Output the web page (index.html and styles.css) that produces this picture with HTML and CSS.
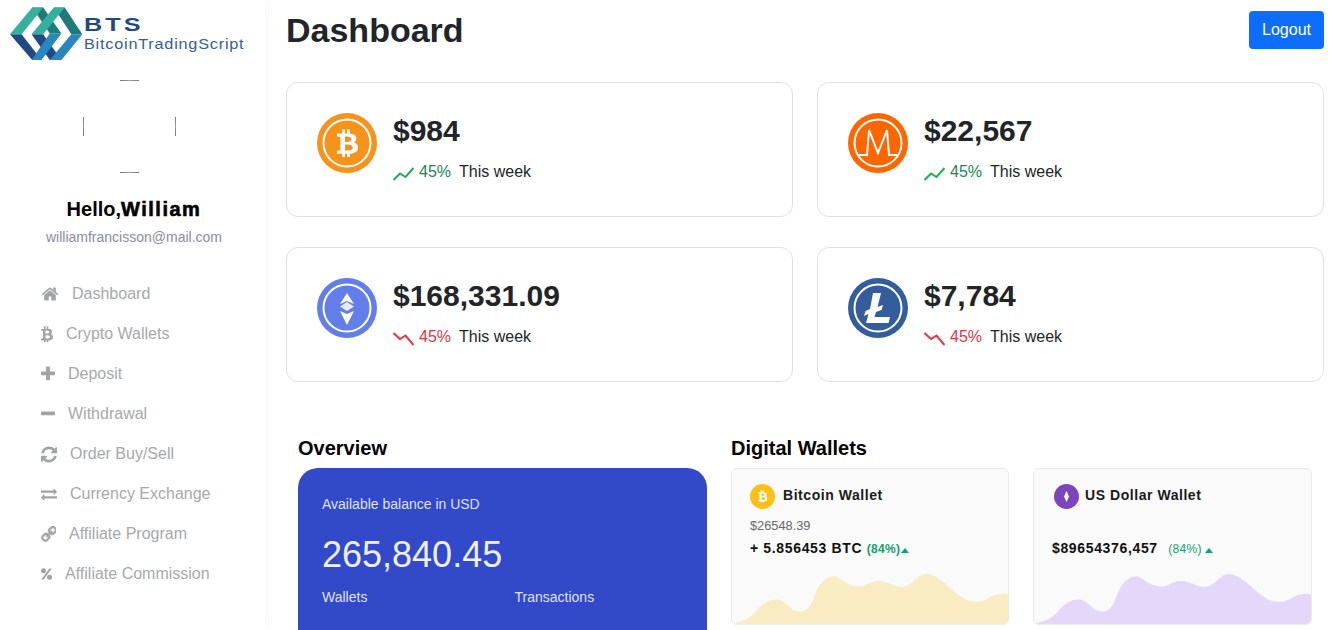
FILE: index.html
```html
<!DOCTYPE html>
<html lang="en">
<head>
    <meta charset="UTF-8">
    <meta name="viewport" content="width=device-width, initial-scale=1.0">
    <title>Dashboard</title>
    <link rel="stylesheet" href="styles.css">
</head>
<body>

<svg class="defs" width="0" height="0">
    <symbol id="btc" viewBox="64 128 1200 1536"><path d="M1167 640q18 182-131 258 117 28 175 103t45 214q-7 71-32.500 125t-64.500 89-97 58.500-121.500 34.500-145.500 20v255h-154v-251q-80 0-122-1v252h-154v-255q-18 0-54-.5t-55-.5h-200l31-183h111q50 0 58-51v-402h16q-6-1-16-1v-287q-13-68-89-68h-111v-164l212 1q64 0 97-1v-252h154v247q82-2 122-2v-245h154v252q79 7 140 22.500t113 45 82.500 78 36.500 114.500zm-215 545q0-36-15-64t-37-46-57.500-30.500-65.500-18.500-74-9-69-3-64.500 1-47.500 1v338q8 0 37 .5t48 .5 53-1.500 58.500-4 57-8.500 55.500-14 47.500-21 39.500-30 24.500-40 9.500-51zm-71-476q0-33-12.500-58.500t-30.500-42-48-28-55-16.500-61.500-8-58-2.500-54 1-39.500 .5v307q5 0 34.500 .5t46.500 0 50-2 55-5.500 51.500-11 48.500-18.500 37-27 27-38.500 9-51z"/></symbol>
    <symbol id="up" viewBox="0 0 21 14"><polyline points="0.500,13 7,6.500 12.500,10 20.500,1" fill="none" stroke="currentColor" stroke-width="2"/></symbol>
    <symbol id="down" viewBox="0 0 21 14"><polyline points="0.500,1 7,7 12.500,3.500 20.500,13" fill="none" stroke="currentColor" stroke-width="2"/></symbol>
    <symbol id="wave" viewBox="20 340 830 152" preserveAspectRatio="none"><path d="M20 490C60 485 80 470 100 445C120 425 140 415 160 420C185 425 195 455 225 455C255 455 262 420 275 390C290 360 315 348 330 350C350 355 360 380 405 380C425 380 430 365 460 364C490 363 505 382 530 382C565 380 575 343 605 343C640 343 680 395 720 418C745 430 770 428 790 415C810 403 830 400 850 403L850 492L20 492Z"/></symbol>
</svg>

<!-- Sidebar -->
<div class="sidebar">
    <div class="logo">
        <svg width="83" height="62" viewBox="0 0 250 185">
            <polygon points="30,102 65,102 125,180 97,180" fill="#1f4a84"/>
            <polygon points="95,102 130,102 185,180 150,180" fill="#1f4a84"/>
            <polygon points="150,100 185,100 125,180 95,180" fill="#2a86c0"/>
            <polygon points="215,102 248,102 185,180 150,180" fill="#2a86c0"/>
            <polygon points="97,22 130,22 185,100 150,100" fill="#1e7b78"/>
            <polygon points="162,22 195,22 248,102 215,102" fill="#1e7b78"/>
            <polygon points="30,102 97,22 130,22 65,102" fill="#34b09f"/>
            <polygon points="95,102 162,22 195,22 130,102" fill="#34b09f"/>
        </svg>
        <div class="logo-text">
            <span class="logo-bts">BTS</span>
            <span class="logo-name">BitcoinTradingScript</span>
        </div>
    </div>

    <svg class="avatar" width="93" height="93" viewBox="0 0 93 93">
        <path d="M37 .5Q46.500 0 56 .5M37 92.500Q46.500 93 56 92.500M.5 37Q0 46.500 .5 56M92.500 37Q93 46.500 92.500 56" fill="none" stroke="#777" stroke-width="1"/>
    </svg>

    <div class="hello">Hello,<strong>William</strong></div>
    <div class="email">williamfrancisson@mail.com</div>

    <ul class="menu">
        <li>
            <svg width="18" height="18" viewBox="0 0 1664 1792"><path d="M1408 992v480q0 26-19 45t-45 19h-384v-384h-256v384h-384q-26 0-45-19t-19-45v-480q0-1 .5-3t.5-3l575-474 575 474q1 2 1 6zm223-69l-62 74q-8 9-21 11h-3q-13 0-21-7l-692-577-692 577q-12 8-24 7-13-2-21-11l-62-74q-8-10-7-23.500t11-21.500l719-599q32-26 76-26t76 26l244 204v-195q0-14 9-23t23-9h192q14 0 23 9t9 23v408l219 182q10 8 11 21.500t-7 23.500z"/></svg>
            Dashboard
        </li>
        <li>
            <svg width="12" height="16"><use href="#btc"/></svg>
            Crypto Wallets
        </li>
        <li>
            <svg width="14" height="16" viewBox="190 190 1412 1412"><path d="M1600 736v192q0 40-28 68t-68 28h-416v416q0 40-28 68t-68 28h-192q-40 0-68-28t-28-68v-416h-416q-40 0-68-28t-28-68v-192q0-40 28-68t68-28h416v-416q0-40 28-68t68-28h192q40 0 68 28t28 68v416h416q40 0 68 28t28 68z"/></svg>
            Deposit
        </li>
        <li>
            <svg width="14" height="16" viewBox="190 190 1412 1412"><path d="M1600 736v192q0 40-28 68t-68 28h-1216q-40 0-68-28t-28-68v-192q0-40 28-68t68-28h1216q40 0 68 28t28 68z"/></svg>
            Withdrawal
        </li>
        <li>
            <svg width="16" height="17" viewBox="128 128 1536 1536"><path d="M1639 1056q0 5-1 7-64 268-268 434.500t-478 166.500q-146 0-282.500-55t-243.500-157l-129 129q-19 19-45 19t-45-19-19-45v-448q0-26 19-45t45-19h448q26 0 45 19t19 45-19 45l-137 137q71 66 161 102t187 36q134 0 250-65t186-179q11-17 53-117 8-23 30-23h192q13 0 22.500 9.500t9.500 22.500zm25-800v448q0 26-19 45t-45 19h-448q-26 0-45-19t-19-45 19-45l138-138q-148-137-349-137-134 0-250 65t-186 179q-11 17-53 117-8 23-30 23h-199q-13 0-22.500-9.500t-9.500-22.500v-7q65-268 270-434.500t480-166.500q146 0 284 55.500t245 156.500l130-129q19-19 45-19t45 19 19 45z"/></svg>
            Order Buy/Sell
        </li>
        <li>
            <svg width="16" height="16" viewBox="0 128 1792 1536"><path d="M1792 1184v192q0 13-9.500 22.500t-22.500 9.500h-1376v192q0 13-9.500 22.500t-22.500 9.500q-12 0-24-10l-319-320q-9-9-9-22 0-14 9-23l320-320q9-9 23-9 13 0 22.500 9.500t9.500 22.500v192h1376q13 0 22.500 9.500t9.500 22.500zm0-544q0 14-9 23l-320 320q-9 9-23 9-13 0-22.500-9.500t-9.500-22.500v-192h-1376q-13 0-22.500-9.500t-9.500-22.500v-192q0-13 9.500-22.500t22.500-9.500h1376v-192q0-14 9-23t23-9q12 0 24 10l319 319q9 9 9 23z"/></svg>
            Currency Exchange
        </li>
        <li>
            <svg class="icon-link" width="15" height="17" viewBox="128 128 1536 1536"><path transform="translate(1792 0) scale(-1 1)" d="M1456 1216q0-40-28-68l-208-208q-28-28-68-28-42 0-72 32 3 3 19 18.500t21.500 21.500 15 19 13 25.500 3.500 27.500q0 40-28 68t-68 28q-15 0-27.500-3.500t-25.500-13-19-15-21.500-21.500-18.500-19q-33 31-33 73 0 40 28 68l206 207q27 27 68 27 40 0 68-26l147-146q28-28 28-67zm-703-705q0-40-28-68l-206-207q-28-28-68-28-39 0-68 27l-147 146q-28 28-28 67 0 40 28 68l208 208q27 27 68 27 42 0 72-31-3-3-19-18.500t-21.500-21.500-15-19-13-25.500-3.500-27.500q0-40 28-68t68-28q15 0 27.500 3.500t25.500 13 19 15 21.500 21.500 18.500 19q33-31 33-73zm895 705q0 120-85 203l-147 146q-83 83-203 83-121 0-204-85l-206-207q-83-83-83-203 0-123 88-209l-88-88q-86 88-208 88-120 0-204-84l-208-208q-84-84-84-204t85-203l147-146q83-83 203-83 121 0 204 85l206 207q83 83 83 203 0 123-88 209l88 88q86-88 208-88 120 0 204 84l208 208q84 84 84 204z"/></svg>
            Affiliate Program
        </li>
        <li>
            <svg width="11" height="12" viewBox="0 0 11 12"><circle cx="2.500" cy="2.800" r="2.500"/><circle cx="8.500" cy="9.200" r="2.500"/><polygon points="8.300,.6 10.700,.6 2.700,11.400 .3,11.400"/></svg>
            Affiliate Commission
        </li>
    </ul>
</div>

<!-- Main Content -->
<div class="content">
    <div class="topbar">
        <h1>Dashboard</h1>
        <button class="logout">Logout</button>
    </div>

    <div class="stats">
        <div class="stat-card">
            <svg class="coin" width="60" height="60" viewBox="0 0 60 60">
                <circle cx="30" cy="30" r="30" fill="#f7931a"/>
                <circle cx="30" cy="30" r="23.500" fill="none" stroke="#fff" stroke-width="2"/>
                <use href="#btc" x="20" y="15" width="21" height="29" fill="#fff"/>
            </svg>
            <div>
                <div class="amount">$984</div>
                <div class="trend">
                    <svg class="trend-up" width="21" height="14"><use href="#up"/></svg>
                    <span class="pct-up">45%</span>
                    <span>This week</span>
                </div>
            </div>
        </div>
        <div class="stat-card">
            <svg class="coin" width="60" height="60" viewBox="0 0 60 60">
                <circle cx="30" cy="30" r="30" fill="#ff6600"/>
                <circle cx="30" cy="30" r="23.500" fill="none" stroke="#fff" stroke-width="2"/>
                <polyline points="9,42 19,42 21,17 30,40 39,17 41,42 51,42" fill="none" stroke="#fff" stroke-width="2"/>
            </svg>
            <div>
                <div class="amount">$22,567</div>
                <div class="trend">
                    <svg class="trend-up" width="21" height="14"><use href="#up"/></svg>
                    <span class="pct-up">45%</span>
                    <span>This week</span>
                </div>
            </div>
        </div>
        <div class="stat-card">
            <svg class="coin" width="60" height="60" viewBox="0 0 60 60">
                <circle cx="30" cy="30" r="30" fill="#627eea"/>
                <circle cx="30" cy="30" r="23.500" fill="none" stroke="#fff" stroke-width="2"/>
                <polygon points="30,15 37,26 30,23 23,26" fill="#fff"/>
                <polygon points="30,24 37,28.500 30,33 23,28.500" fill="#fff" opacity=".85"/>
                <polygon points="30,47 37,33 30,36 23,33" fill="#fff"/>
            </svg>
            <div>
                <div class="amount">$168,331.09</div>
                <div class="trend">
                    <svg class="trend-down" width="21" height="14"><use href="#down"/></svg>
                    <span class="pct-down">45%</span>
                    <span>This week</span>
                </div>
            </div>
        </div>
        <div class="stat-card">
            <svg class="coin" width="60" height="60" viewBox="0 0 60 60">
                <circle cx="30" cy="30" r="30" fill="#345d9d"/>
                <circle cx="30" cy="30" r="23.500" fill="none" stroke="#fff" stroke-width="2"/>
                <polygon points="25,15 33,15 29.500,29 35,27 33.500,32 28,34 26.500,39 42,39 40.500,45 18,45 20.500,36 16,38 17.500,33 22,31" fill="#fff"/>
            </svg>
            <div>
                <div class="amount">$7,784</div>
                <div class="trend">
                    <svg class="trend-down" width="21" height="14"><use href="#down"/></svg>
                    <span class="pct-down">45%</span>
                    <span>This week</span>
                </div>
            </div>
        </div>
    </div>

    <div class="lower">
        <div class="overview">
            <h2>Overview</h2>
            <div class="balance-card">
                <div class="balance-label">Available balance in USD</div>
                <div class="balance">265,840.45</div>
                <div class="balance-links">
                    <span>Wallets</span>
                    <span>Transactions</span>
                </div>
            </div>
        </div>
        <div class="wallets">
            <h2>Digital Wallets</h2>
            <div class="wallet-row">
                <div class="wallet">
                    <div class="wallet-head">
                        <svg width="25" height="25" viewBox="0 0 25 25">
                            <circle cx="12.500" cy="12.500" r="12.500" fill="#fdbf13"/>
                            <use href="#btc" x="8" y="6" width="9.500" height="12.500" fill="#fff"/>
                        </svg>
                        <span>Bitcoin Wallet</span>
                    </div>
                    <div class="wallet-usd">$26548.39</div>
                    <div class="wallet-amount">+ 5.856453 BTC <span class="wallet-pct">(84%)</span><span class="caret"></span></div>
                    <svg class="wave wave-yellow"><use href="#wave"/></svg>
                </div>
                <div class="wallet wallet-usd-card">
                    <div class="wallet-head">
                        <svg width="25" height="25" viewBox="0 0 25 25">
                            <circle cx="12.500" cy="12.500" r="12.500" fill="#7d44bd"/>
                            <polygon points="12.500,7 15,12.500 12.500,18 10,12.500" fill="#fff"/>
                        </svg>
                        <span>US Dollar Wallet</span>
                    </div>
                    <div class="wallet-usd">&nbsp;</div>
                    <div class="wallet-amount">$89654376,457 <span class="wallet-pct">(84%)</span><span class="caret"></span></div>
                    <svg class="wave wave-purple"><use href="#wave"/></svg>
                </div>
            </div>
        </div>
    </div>
</div>

</body>
</html>
```

FILE: styles.css
```css
html, body {
    height: 100%;
}

body {
    font-family: 'Liberation Sans', Arial, sans-serif;
    margin: 0;
    padding: 0;
    background: #fff;
    color: #212529;
    display: flex;
    overflow: hidden;
}

.defs {
    position: absolute;
}

/* Sidebar */
.sidebar {
    width: 265px;
    flex-shrink: 0;
    height: 100%;
    background-color: #fff;
    box-shadow: 2px 0 8px rgba(0, 0, 0, 0.04);
}

.logo {
    display: flex;
    align-items: flex-start;
    height: 80px;
}

.logo svg {
    margin-right: 1px;
    flex-shrink: 0;
}

.logo-text {
    display: flex;
    flex-direction: column;
    padding-top: 15px;
    color: #1f4a84;
}

.logo-bts {
    font-size: 18px;
    line-height: 20px;
    font-weight: bold;
    letter-spacing: 2.2px;
    transform: scaleX(1.4);
    transform-origin: left;
}

.logo-name {
    font-size: 14.5px;
    line-height: 18px;
    letter-spacing: 0.7px;
    color: #35609a;
    white-space: nowrap;
    transform: scaleX(1.12);
    transform-origin: left;
}

.avatar {
    display: block;
    margin-left: 83px;
}

.hello {
    margin-top: 24px;
    padding-left: 3px;
    text-align: center;
    font-size: 20px;
    line-height: 24px;
    color: #000;
    font-weight: bold;
}

.hello strong {
    letter-spacing: 1.5px;
    -webkit-text-stroke: 0.6px #000;
}

.email {
    margin-top: 7px;
    padding-left: 3px;
    text-align: center;
    font-size: 14px;
    line-height: 18px;
    color: #8b8ba5;
}

.menu {
    list-style: none;
    margin: 28px 0 0;
    padding: 0 0 0 41px;
}

.menu li {
    display: flex;
    align-items: center;
    gap: 13px;
    height: 40px;
    font-size: 16px;
    color: #a6a9ab;
}

.menu svg {
    fill: #a0a4a6;
    flex-shrink: 0;
}

.icon-link {
    stroke: #a0a4a6;
    stroke-width: 50;
}

/* Main Content */
.content {
    flex: 1;
    min-width: 0;
    padding: 0 6px 0 21px;
}

.topbar {
    display: flex;
    justify-content: space-between;
    align-items: flex-start;
    height: 82px;
}

h1 {
    margin: 10px 0 0;
    font-size: 34px;
    line-height: 40px;
    color: #212529;
}

.logout {
    margin-top: 11px;
    width: 75px;
    height: 38px;
    background-color: #0d6efd;
    color: #fff;
    font-family: inherit;
    font-size: 16px;
    border: none;
    border-radius: 4px;
}

.stats {
    display: grid;
    grid-template-columns: 1fr 1fr;
    gap: 30px 24px;
}

.stat-card {
    display: flex;
    gap: 16px;
    height: 135px;
    box-sizing: border-box;
    padding: 30px;
    border: 1px solid #dfe0e2;
    border-radius: 12px;
}

.coin {
    flex-shrink: 0;
}

.amount {
    font-size: 30px;
    line-height: 36px;
    font-weight: bold;
    color: #212529;
}

.trend {
    display: flex;
    align-items: center;
    gap: 5px;
    margin-top: 14px;
    font-size: 16px;
    line-height: 18px;
}

.trend svg {
    margin-top: 3px;
}

.trend-up {
    color: #16b14f;
}

.trend-down {
    color: #e8343f;
}

.pct-up {
    color: #198754;
    margin-right: 3px;
}

.pct-down {
    color: #dc3545;
    margin-right: 3px;
}

/* Overview and wallets */
.lower {
    display: flex;
    gap: 24px;
    margin-top: 54px;
    padding: 0 12px;
}

.lower h2 {
    margin: 0 0 8px;
    font-size: 20px;
    line-height: 24px;
    color: #000;
}

.overview {
    width: 409px;
    flex-shrink: 0;
}

.balance-card {
    height: 200px;
    box-sizing: border-box;
    padding: 28px 24px;
    background-color: #3249c9;
    border-radius: 20px;
    color: #dfe2f7;
}

.balance-label {
    font-size: 14px;
    line-height: 16px;
}

.balance {
    margin-top: 22px;
    font-size: 36px;
    line-height: 42px;
    color: #eef0fb;
}

.balance-links {
    display: grid;
    grid-template-columns: 192.5px 1fr;
    margin-top: 13px;
    font-size: 14px;
    line-height: 16px;
}

.wallets {
    flex: 1;
}

.wallet-row {
    display: flex;
    gap: 24px;
}

.wallet {
    position: relative;
    width: 278px;
    height: 157px;
    box-sizing: border-box;
    padding: 15px 18px;
    background-color: #fafafa;
    border: 1px solid #eaeaea;
    border-radius: 6px;
    overflow: hidden;
}

.wallet-head {
    display: flex;
    align-items: center;
    gap: 8px;
    font-size: 14px;
    font-weight: bold;
    letter-spacing: 0.55px;
    color: #1a1a1a;
}

.wallet-head span {
    margin-bottom: 4px;
}

.wallet-usd {
    margin-top: 9px;
    font-size: 12.8px;
    line-height: 16px;
    color: #666;
}

.wallet-amount {
    margin-top: 5px;
    font-size: 14px;
    line-height: 18px;
    font-weight: bold;
    letter-spacing: 0.65px;
    color: #111;
}

.wallet-pct {
    font-size: 12px;
    letter-spacing: 0.3px;
    color: #16a06c;
}

.caret {
    display: inline-block;
    margin-left: 1px;
    border-left: 4px solid transparent;
    border-right: 4px solid transparent;
    border-bottom: 5px solid #16a06c;
}

.wallet-usd-card {
    width: 279px;
}

.wallet-usd-card .wallet-head {
    padding-left: 2px;
    gap: 6px;
}

.wallet-usd-card .wallet-pct {
    font-weight: normal;
    margin-left: 6px;
}

.wallet-usd-card .caret {
    margin-left: 3px;
}

.wave {
    position: absolute;
    left: 0;
    bottom: 0;
    width: 100%;
    height: 51px;
}

.wave-yellow {
    fill: #f9ebc2;
}

.wave-purple {
    fill: #e5d7f9;
}
```
